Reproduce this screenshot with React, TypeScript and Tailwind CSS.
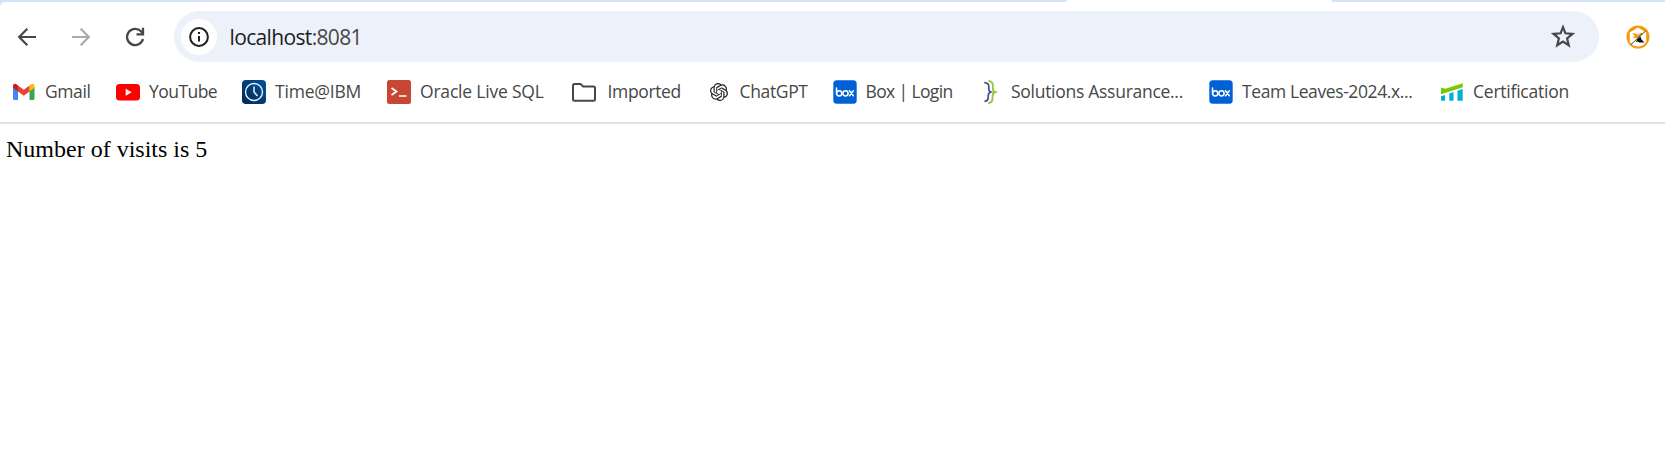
import type { ReactNode } from 'react';
import { SiOpenai } from 'react-icons/si';

const Gmail = () => (
  <svg width="24" height="24" viewBox="0 0 24 24">
    <path d="M1 7v11.500A1.500 1.500 0 0 0 2.500 20H6V10.500z" fill="#4285f4" />
    <path d="M17.500 10.500V20H21a1.500 1.500 0 0 0 1.500-1.500V7z" fill="#34a853" />
    <path d="M17.500 5.500v6l5-3.800V6.200c0-2.200-2.300-3-3.800-1.700z" fill="#fbbc04" />
    <path d="M6 5.500l5.800 4.300 5.700-4.300v6L11.800 15.800 6 11.500z" fill="#ea4335" />
    <path d="M1 6.200v1.500l5 3.800v-6L4.800 4.500C3.300 3.200 1 4 1 6.200z" fill="#c5221f" />
  </svg>
);
const YouTube = () => (
  <svg width="24" height="24" viewBox="0 0 24 24">
    <rect y="4" width="24" height="16.500" rx="3.500" fill="#f00" />
    <path d="M9.700 8.700v7l6-3.500z" fill="#fff" />
  </svg>
);
const Clock = () => (
  <svg width="24" height="24" viewBox="0 0 24 24">
    <defs>
      <linearGradient id="clock" x1="1" y1="0" x2="0" y2="1">
        <stop stopColor="#00539a" />
        <stop offset="1" stopColor="#01274f" />
      </linearGradient>
    </defs>
    <rect width="24" height="24" rx="4" fill="url(#clock)" />
    <circle cx="12" cy="12" r="8.500" fill="none" stroke="#e5f0fa" strokeWidth="1.400" />
    <path d="M12 6.500V12l3.500 4" fill="none" stroke="#e5f0fa" strokeWidth="1.500" />
  </svg>
);
const Terminal = () => (
  <svg width="24" height="24" viewBox="0 0 24 24">
    <rect width="24" height="24" rx="2.500" fill="#c74634" />
    <path d="M4.500 8l5 3.500-5 3.500" fill="none" stroke="#fff" strokeWidth="1.800" />
    <path d="M12 16h7.500" stroke="#fff" strokeWidth="1.600" />
  </svg>
);
const Folder = () => (
  <svg width="24" height="24" viewBox="0 0 24 24">
    <path d="M1 5.500c0-1 .6-1.600 1.500-1.600h6l2.600 2.600h10.400c.9 0 1.500.6 1.500 1.500v11.200c0 .9-.6 1.500-1.500 1.500h-19c-.9 0-1.500-.6-1.500-1.500z" fill="none" stroke="#474747" strokeWidth="2" />
  </svg>
);
const Box = () => (
  <svg width="24" height="24" viewBox="0 0 24 24">
    <rect x=".3" y=".3" width="23.400" height="23.400" rx="3.500" fill="#0061d5" />
    <g fill="none" stroke="#fff" strokeWidth="1.500" strokeLinecap="round">
      <path d="M3.500 8v5.300" />
      <circle cx="6.200" cy="13.300" r="2.600" />
      <circle cx="12.500" cy="13.300" r="2.600" />
      <path d="M16.500 10.800l3.800 5M20.300 10.800l-3.800 5" />
    </g>
  </svg>
);
const Braces = () => (
  <svg width="24" height="24" viewBox="0 0 24 24" fill="none">
    <path d="M6.200 2.500c3.500.3 4.900 1.800 4.600 4.700-.2 2.700-.2 4.200 2 4.800-2.500.8-2.800 2.300-2.600 4.700.3 2.900-.9 4.300-3.700 4.600" stroke="#4b4592" strokeWidth="1.700" />
    <path d="M10.500.8c3.500.5 4.700 2.300 4.400 5.600-.3 3.100-.2 5 2.200 5.600-2.600.8-2.800 2.600-2.600 5.500.3 3.400-.9 5.300-4.300 5.700" stroke="#94cb3b" strokeWidth="1.900" />
  </svg>
);
const Chart = () => (
  <svg width="24" height="24" viewBox="0 0 24 24">
    <path d="M1 7.500l4.500 1.300L22.800 3.300v4L1 14.300z" fill="#78c800" />
    <path d="M1 16.200l4-1.300v5.900H1zM9.300 13.500l4.200-1.400v8.700H9.300zM17.500 10.700l5.200-1.700v11.800h-5.200z" fill="#00b0d8" />
  </svg>
);

function Bookmark({ icon, label, box, text }: { icon: ReactNode; label: string; box: string; text: string }) {
  return (
    <div className={`flex shrink-0 items-center ${box}`}>
      <span className="flex size-6 shrink-0 items-center justify-center">{icon}</span>
      <span className={`-mt-0.5 whitespace-nowrap leading-6 ${text}`}>{label}</span>
    </div>
  );
}

export default function App() {
  return (
    <div className="h-[472px] w-full overflow-hidden bg-white">
      <div className="h-[7px] bg-[#d3e3fd]">
        <div className="flex h-[2px]">
          <div className="ml-[1066px] h-[2px] w-[266px] rounded-t-[2px] bg-white" />
        </div>
        <div className="h-[5px] rounded-tl-[5px] bg-white" />
      </div>
      <div className="mt-1 flex h-[51px] items-center">
        <svg className="ml-[15px] shrink-0" width="24" height="24" viewBox="0 0 24 24" fill="none" stroke="#474747" strokeWidth="2.200">
          <path d="M21 12H4.500M12.300 3.800L4.200 12l8.100 8.200" />
        </svg>
        <svg className="ml-[30px] shrink-0" width="24" height="24" viewBox="0 0 24 24" fill="none" stroke="#aaa" strokeWidth="2.200">
          <path d="M3 12h16.500M11.700 3.800l8.100 8.200-8.100 8.200" />
        </svg>
        <svg className="ml-[30px] shrink-0" width="24" height="24" viewBox="0 0 24 24" fill="none" stroke="#474747" strokeWidth="2.300">
          <path d="M20 14a8.100 8.100 0 1 1-2.100-7.700L20 8.500M20 2.800V9.300h-6.500" />
        </svg>
        <div className="ml-[27px] flex h-[51px] w-[1425px] shrink-0 items-center rounded-full bg-[#edf1fa]">
          <div className="ml-[7px] flex size-[36px] items-center justify-center rounded-full bg-white">
            <svg width="22" height="22" viewBox="0 0 22 22" fill="none" stroke="#1f1f1f" strokeWidth="2">
              <circle cx="11" cy="11" r="8.900" />
              <path d="M11 10v5.500M11 6v2" />
            </svg>
          </div>
          <div className="ml-[12.500px] font-['Open_Sans',sans-serif] text-[21px] leading-7 tracking-[-0.650px] text-[#1f1f1f]">
            localhost<span className="text-[#474747]">:8081</span>
          </div>
          <svg className="-mt-px mr-[24px] ml-auto" width="24" height="24" viewBox="0 0 24 24" fill="none" stroke="#474747" strokeWidth="2.200">
            <path d="M12 3.200l2.400 6.100 7.100.6-5.400 4.500 1.700 6.900-5.800-3.700-5.800 3.700 1.700-6.900L2.500 9.900l7.100-.6z" />
          </svg>
        </div>
        <svg className="ml-[27px] shrink-0" width="24" height="24" viewBox="0 0 24 24">
          <circle cx="12" cy="12" r="11.500" fill="#f7980c" />
          <path d="M3.800 7.500L12 2.600l8.200 4.900V17c-2 3-5 4.500-8.200 4.500S5.800 20 3.800 17z" fill="#fff" />
          <path d="M6 8.500h4l2 1.500 2-2h3.500l-5 5L6.500 13l2.500-2z" fill="#f7980c" />
          <path d="M11 14.500l3.500-3 1 3 3 3H13l-1-1-2 .5z" fill="#111" />
          <path d="M5 19.500L19.500 6" stroke="#444" strokeWidth="1" />
        </svg>
      </div>
      <div className="flex h-[62px] items-center border-b-2 border-[#e1e1e1] pb-[1px] pl-[12px] font-['Open_Sans',sans-serif] text-[17.500px] text-[#474747]">
        <Bookmark icon={<Gmail />} label="Gmail" box="w-[104px]" text="ml-[9px] tracking-[-0.4px]" />
        <Bookmark icon={<YouTube />} label="YouTube" box="w-[126px]" text="ml-[9px] tracking-[-0.55px]" />
        <Bookmark icon={<Clock />} label="Time@IBM" box="w-[145px]" text="ml-[9px] tracking-[-0.2px]" />
        <Bookmark icon={<Terminal />} label="Oracle Live SQL" box="w-[185px]" text="ml-[9px] tracking-[-0.2px]" />
        <Bookmark icon={<Folder />} label="Imported" box="w-[135px]" text="ml-[11.500px] tracking-[-0.35px]" />
        <Bookmark icon={<SiOpenai size={18} color="#222" />} label="ChatGPT" box="w-[126px]" text="ml-[8.500px] tracking-[-0.35px]" />
        <Bookmark icon={<Box />} label="Box | Login" box="w-[145px]" text="ml-[8.500px] tracking-[-0.63px]" />
        <Bookmark icon={<Braces />} label="Solutions Assurance..." box="w-[231px]" text="ml-[9px] tracking-[-0.28px]" />
        <Bookmark icon={<Box />} label="Team Leaves-2024.x..." box="w-[231px]" text="ml-[9px] tracking-[-0.4px]" />
        <Bookmark icon={<Chart />} label="Certification" box="w-[140px]" text="ml-[9px] tracking-[-0.23px]" />
      </div>
      <div className="pl-[6px] pt-[11px] font-['Liberation_Serif',serif] text-[24px] leading-7 text-black">Number of visits is 5</div>
    </div>
  );
}
